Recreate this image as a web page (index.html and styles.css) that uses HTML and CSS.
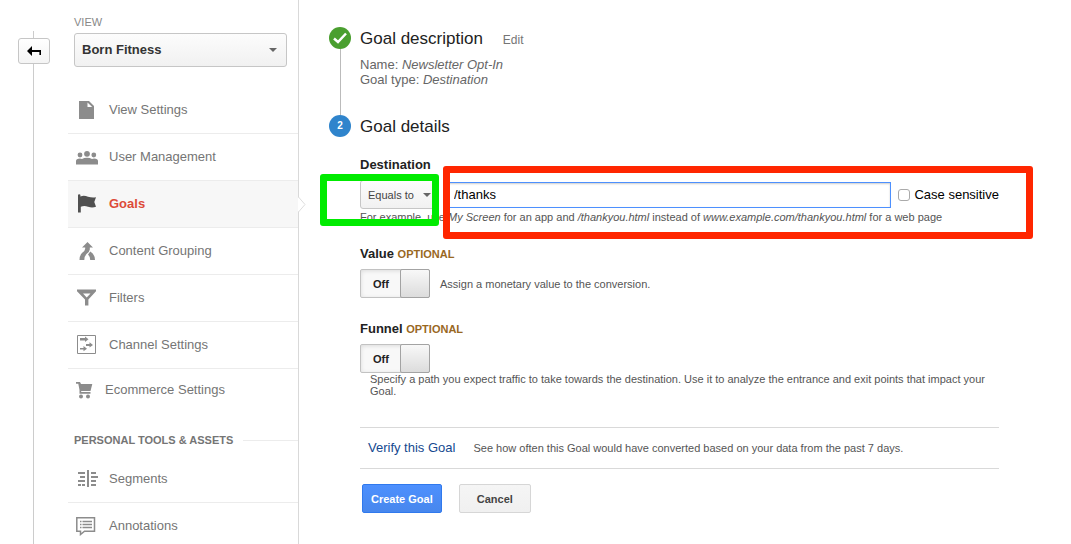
FILE: index.html
```html
<!DOCTYPE html>
<html lang="en">
<head>
<meta charset="utf-8">
<title>Goals</title>
<link rel="stylesheet" href="styles.css">
</head>
<body>
<div class="page">
  <div class="rail">
    <button class="back" type="button" aria-label="Back">
      <svg width="14" height="10" viewBox="0 0 14 10"><path d="M0 5 5 0V4H14V9H12.4V6H5V10Z" fill="#000"/></svg>
    </button>
  </div>
  <aside class="sidebar">
    <div class="view">
      <label class="view-label" for="view">VIEW</label>
      <span class="picker picker-view">
        <select id="view"><option>Born Fitness</option></select>
      </span>
    </div>
    <nav>
      <a class="item" href="#"><svg class="icon" viewBox="0 0 22 20"><path d="M3 1H13L18 6V19H3Z" fill="#8c8c8c"/><path d="M11.5 2.5V7H16.2Z" fill="#fff"/></svg>View Settings</a>
      <a class="item" href="#"><svg class="icon" viewBox="0 0 22 20"><g fill="#8c8c8c"><circle cx="4" cy="8" r="2.4"/><circle cx="11" cy="6.8" r="2.9"/><circle cx="17.8" cy="8" r="2.4"/><path d="M0 17.500V14Q0 11.8 4 11.6L6 12Q8 10.7 11 10.7T16 12L18 11.6Q22 11.8 22 14V17.500Z"/></g></svg>User Management</a>
      <a class="item active" href="#" aria-current="page"><svg class="icon" viewBox="0 0 22 20"><path d="M2 1Q2 .3 3.200 .3T4.400 1V2.500Q8 .8 12 2.800 16 4 20 3.300L18.3 8 20 12.8Q16 14.300 12 12.700 8 11.500 4.800 12.800V18.500H2Z" fill="#505050"/></svg>Goals<svg class="notch" width="8" height="15" viewBox="0 0 8 15"><path d="M0 0 7 7.5 0 15Z" fill="#fff"/><path d="M.5 0 7 7.5 .5 15" fill="none" stroke="#ddd"/></svg></a>
      <a class="item" href="#"><svg class="icon" viewBox="0 0 22 20"><path d="M11.500 1 17 6.500H13.800V8.500Q13.500 11 10.500 13 8.500 15 8.300 19H3.500Q3.500 14 6.500 11.500 9.200 9.500 9.200 7.500V6.500H6Z" fill="#8c8c8c"/><path d="M12 13.500 14.300 10.500Q18.800 13 19 19H14.200Q14.200 15.500 12 13.500Z" fill="#8c8c8c"/></svg>Content Grouping</a>
      <a class="item" href="#"><svg class="icon" viewBox="0 0 22 20"><path fill-rule="evenodd" d="M1 1.500H20V3.300L12.4 11.500V17.500H9V11.500L1 3.300ZM7 5.500 10.7 9.500 14.5 5.500Z" fill="#8c8c8c"/></svg>Filters</a>
      <a class="item" href="#"><svg class="icon" viewBox="0 0 22 20"><path d="M1.5 .5H19.5V18.5H1.5Z" fill="none" stroke="#8c8c8c"/><path d="M4 3H9V1.5L12.5 4.3 9 7V5.5H4ZM10 9H13.5V7.2L17 10 13.5 12.500V11H10ZM4 13H7.5V11L11 13.8 7.5 16.3V14.5H4Z" fill="#8c8c8c"/></svg>Channel Settings</a>
      <a class="item compact" href="#"><svg class="icon icon-cart" viewBox="0 0 18 20"><path d="M0 2H4L5 4H16.300L14.500 11H5.200V12H14.500V13.800H3.500V10L2.300 3.800H0Z" fill="#8c8c8c"/><circle cx="5" cy="16.500" r="2" fill="#8c8c8c"/><circle cx="12" cy="16.500" r="2" fill="#8c8c8c"/></svg>Ecommerce Settings</a>
      <h2 class="group">PERSONAL TOOLS &amp; ASSETS</h2>
      <a class="item" href="#"><svg class="icon" viewBox="0 0 22 20"><path d="M2 4H9M4 8H9M2 12H9M2 16H5M6 16H9M15 4H20M15 8H22M15 12H20M15 16H20" stroke="#8c8c8c" stroke-width="2" fill="none"/><path d="M11 1H13V18H11Z" fill="#8c8c8c"/></svg>Segments</a>
      <a class="item" href="#"><svg class="icon" viewBox="0 0 22 20"><path d="M.8 1.800H18.500V15.200H8.500L4.500 18.500V15.200H.8Z" fill="none" stroke="#8c8c8c" stroke-width="1.500"/><path d="M4 5.500H5.500M6.500 5.500H16M4 8.500H5.500M6.500 8.500H16M4 11.500H5.500M6.500 11.500H16" stroke="#8c8c8c" stroke-width="1.500"/></svg>Annotations</a>
    </nav>
  </aside>
  <main class="main">
    <section class="step">
      <div class="marker">
        <span class="badge done"><svg width="16" height="14" viewBox="0 0 16 14"><path d="M2 7.500 6 11 14 2.500" fill="none" stroke="#fff" stroke-width="2.500"/></svg></span>
        <span class="line"></span>
      </div>
      <div class="step-body summary">
        <div class="step-head"><h1>Goal description</h1><a class="edit" href="#">Edit</a></div>
        <p class="facts">Name: <em>Newsletter Opt-In</em><br>Goal type: <em>Destination</em></p>
      </div>
    </section>
    <section class="step">
      <div class="marker"><span class="badge current">2</span></div>
      <form class="step-body">
        <div class="step-head"><h1>Goal details</h1></div>
        <div class="field destination">
          <label class="title" for="path">Destination</label>
          <div class="row">
            <span class="picker picker-match">
              <select aria-label="Match type"><option>Equals to</option></select>
            </span>
            <input class="path" id="path" type="text" value="/thanks">
            <label class="case"><input type="checkbox">Case sensitive</label>
          </div>
          <p class="hint">For example, use <em>My Screen</em> for an app and <em>/thankyou.html</em> instead of <em>www.example.com/thankyou.html</em> for a web page</p>
          <span class="mark mark-green"></span>
          <span class="mark mark-red"></span>
        </div>
        <div class="field">
          <h3 class="title" id="value">Value <span class="optional">OPTIONAL</span></h3>
          <div class="value-row">
            <button class="toggle" type="button" role="switch" aria-checked="false" aria-labelledby="value"><span class="state">Off</span><span class="knob"></span></button>
            <p class="hint">Assign a monetary value to the conversion.</p>
          </div>
        </div>
        <div class="field">
          <h3 class="title" id="funnel">Funnel <span class="optional">OPTIONAL</span></h3>
          <button class="toggle" type="button" role="switch" aria-checked="false" aria-labelledby="funnel"><span class="state">Off</span><span class="knob"></span></button>
          <p class="hint indented">Specify a path you expect traffic to take towards the destination. Use it to analyze the entrance and exit points that impact your Goal.</p>
        </div>
        <div class="verify"><a href="#">Verify this Goal</a><p class="hint">See how often this Goal would have converted based on your data from the past 7 days.</p></div>
        <div class="actions">
          <button class="btn primary" type="submit">Create Goal</button>
          <button class="btn" type="button">Cancel</button>
        </div>
      </form>
    </section>
  </main>
</div>
</body>
</html>
```
FILE: styles.css
```css
* { box-sizing: border-box; }
body {
  margin: 0;
  background: #fff;
  color: #222;
  font: 13px/16px "Liberation Sans", Arial, sans-serif;
}
h1, h2, h3, p { margin: 0; }
a { text-decoration: none; }
button, input, select { font: inherit; color: inherit; margin: 0; }

.page {
  display: grid;
  grid-template-columns: 68px 231px 1fr;
  min-height: 100vh;
}

.rail {
  margin-top: 31px;
  padding: 7px 0 0 18px;
  background: linear-gradient(#ccc, #ccc) 33px 0 / 1px 100% no-repeat;
}
.back {
  display: flex;
  align-items: center;
  justify-content: center;
  width: 32px;
  height: 26px;
  padding: 0;
  border: 1px solid #c6c6c6;
  border-radius: 3px;
  background: linear-gradient(#fff, #f4f4f4);
}

.sidebar { border-right: 1px solid #d9d9d9; }
.view { padding: 14px 11px 20px 6px; }
.view-label { display: block; font-size: 11px; color: #888; margin-bottom: 3px; }

.picker { display: grid; align-items: center; }
.picker select {
  grid-area: 1 / 1;
  width: 100%;
  appearance: none;
  border: 1px solid #c6c6c6;
  border-radius: 3px;
  background: linear-gradient(#fcfcfc, #f1f1f1);
}
.picker::after {
  content: "";
  grid-area: 1 / 1;
  justify-self: end;
  margin-right: 10px;
  border: 4px solid transparent;
  border-top-color: #666;
  border-bottom: 0;
  pointer-events: none;
}
.picker-view select { height: 34px; padding: 0 7px; font-weight: bold; color: #333; }

.item {
  position: relative;
  display: flex;
  align-items: center;
  gap: 11px;
  padding: 15px 0 15px 8px;
  border-bottom: 1px solid #ececec;
  color: #757575;
}
.item:last-child { padding-bottom: 8px; border-bottom: 0; }
.icon { width: 22px; height: 20px; margin: -2px 0; flex: none; }
.icon-cart { width: 18px; }
.active { background: #f7f7f7; color: #dd4b39; font-weight: bold; }
.notch { position: absolute; right: -8px; top: 16px; }
.compact { padding: 13px 0 0 8px; border-bottom: 0; }
.group {
  display: flex;
  align-items: center;
  gap: 10px;
  padding: 34px 0 0 6px;
  margin-bottom: 8px;
  font-size: 11px;
  color: #757575;
}
.group::after { content: ""; flex: 1; height: 1px; background: #ececec; }

.main { padding: 27px 72px 20px 30px; }
.step { display: flex; gap: 9px; }
.marker { display: flex; flex-direction: column; align-items: center; width: 22px; flex: none; }
.badge {
  display: flex;
  align-items: center;
  justify-content: center;
  width: 22px;
  height: 22px;
  border-radius: 50%;
  color: #fff;
  font-size: 10px;
  font-weight: bold;
}
.done { background: #4a9f2f; }
.current { background: #2f84cc; }
.line { flex: 1; width: 1px; background: #bbb; }
.step-body { flex: 1; min-width: 0; }
.summary { padding-bottom: 28px; }
.step-head { display: flex; align-items: baseline; gap: 20px; }
.step-head h1 { font-size: 17px; line-height: 24px; margin-bottom: -2px; font-weight: normal; }
.edit { font-size: 12px; color: #757575; }
.facts { margin-top: 8px; line-height: 15px; color: #666; }

.field { position: relative; margin-top: 23px; }
.destination { margin-top: 20px; }
.title { display: block; margin-bottom: 7px; font-size: 13px; line-height: 16px; font-weight: bold; }
.optional { font-size: 11px; color: #99681f; }
.row { display: flex; align-items: center; margin-bottom: 2px; }
.picker-match { width: 76px; margin-right: 10px; }
.picker-match select { height: 29px; padding: 0 7px; font-size: 11px; color: #444; }
.picker-match::after { margin-right: 5px; }
.path {
  flex: 1;
  min-width: 0;
  height: 26px;
  padding: 0 7px;
  border: 1px solid #4d90fe;
  box-shadow: inset 0 1px 2px rgba(0, 0, 0, .2);
  background: #fff;
  color: #000;
}
.case { display: flex; align-items: center; gap: 4px; margin-left: 7px; color: #000; white-space: nowrap; }
.case input {
  appearance: none;
  width: 12px;
  height: 12px;
  border: 1px solid #aaa;
  border-radius: 3px;
  background: #fff;
}
.hint { font-size: 11px; line-height: 12px; color: #555; }
.indented { padding-left: 10px; }
.mark { position: absolute; border-radius: 3px; pointer-events: none; }
.mark-green { left: -40px; top: 17px; width: 119px; height: 52px; border: 7px solid #00eb00; }
.mark-red { left: 83px; right: -34px; top: 9px; height: 73px; border: 7px solid #ff2600; }

.value-row { display: flex; align-items: center; gap: 10px; }
.toggle {
  display: flex;
  width: 70px;
  height: 29px;
  padding: 0;
  border: 1px solid #c2c2c2;
  border-radius: 2px;
  background: #f8f8f8;
  box-shadow: inset 0 1px 4px rgba(0, 0, 0, .12);
  font-size: 11px;
  font-weight: bold;
}
.state { flex: 1; align-self: center; }
.knob {
  width: 30px;
  align-self: stretch;
  margin: -1px;
  border: 1px solid #a3a3a3;
  border-radius: 2px;
  background: linear-gradient(#f8f8f8, #dcdcdc);
}

.verify {
  display: flex;
  align-items: center;
  gap: 18px;
  margin-top: 30px;
  padding: 12px 8px;
  border: solid #d9d9d9;
  border-width: 1px 0;
}
.verify a { color: #15498f; white-space: nowrap; }
.actions { display: flex; gap: 17px; margin: 15px 0 0 2px; }
.btn {
  height: 29px;
  padding: 0 17px;
  border: 1px solid #d6d6d6;
  border-radius: 2px;
  background: linear-gradient(#f5f5f5, #f0f0f0);
  color: #444;
  font-size: 11px;
  font-weight: bold;
}
.primary {
  padding: 0 8px;
  border-color: #3079ed;
  background: linear-gradient(#4d90fe, #4787ed);
  color: #fff;
}
```
